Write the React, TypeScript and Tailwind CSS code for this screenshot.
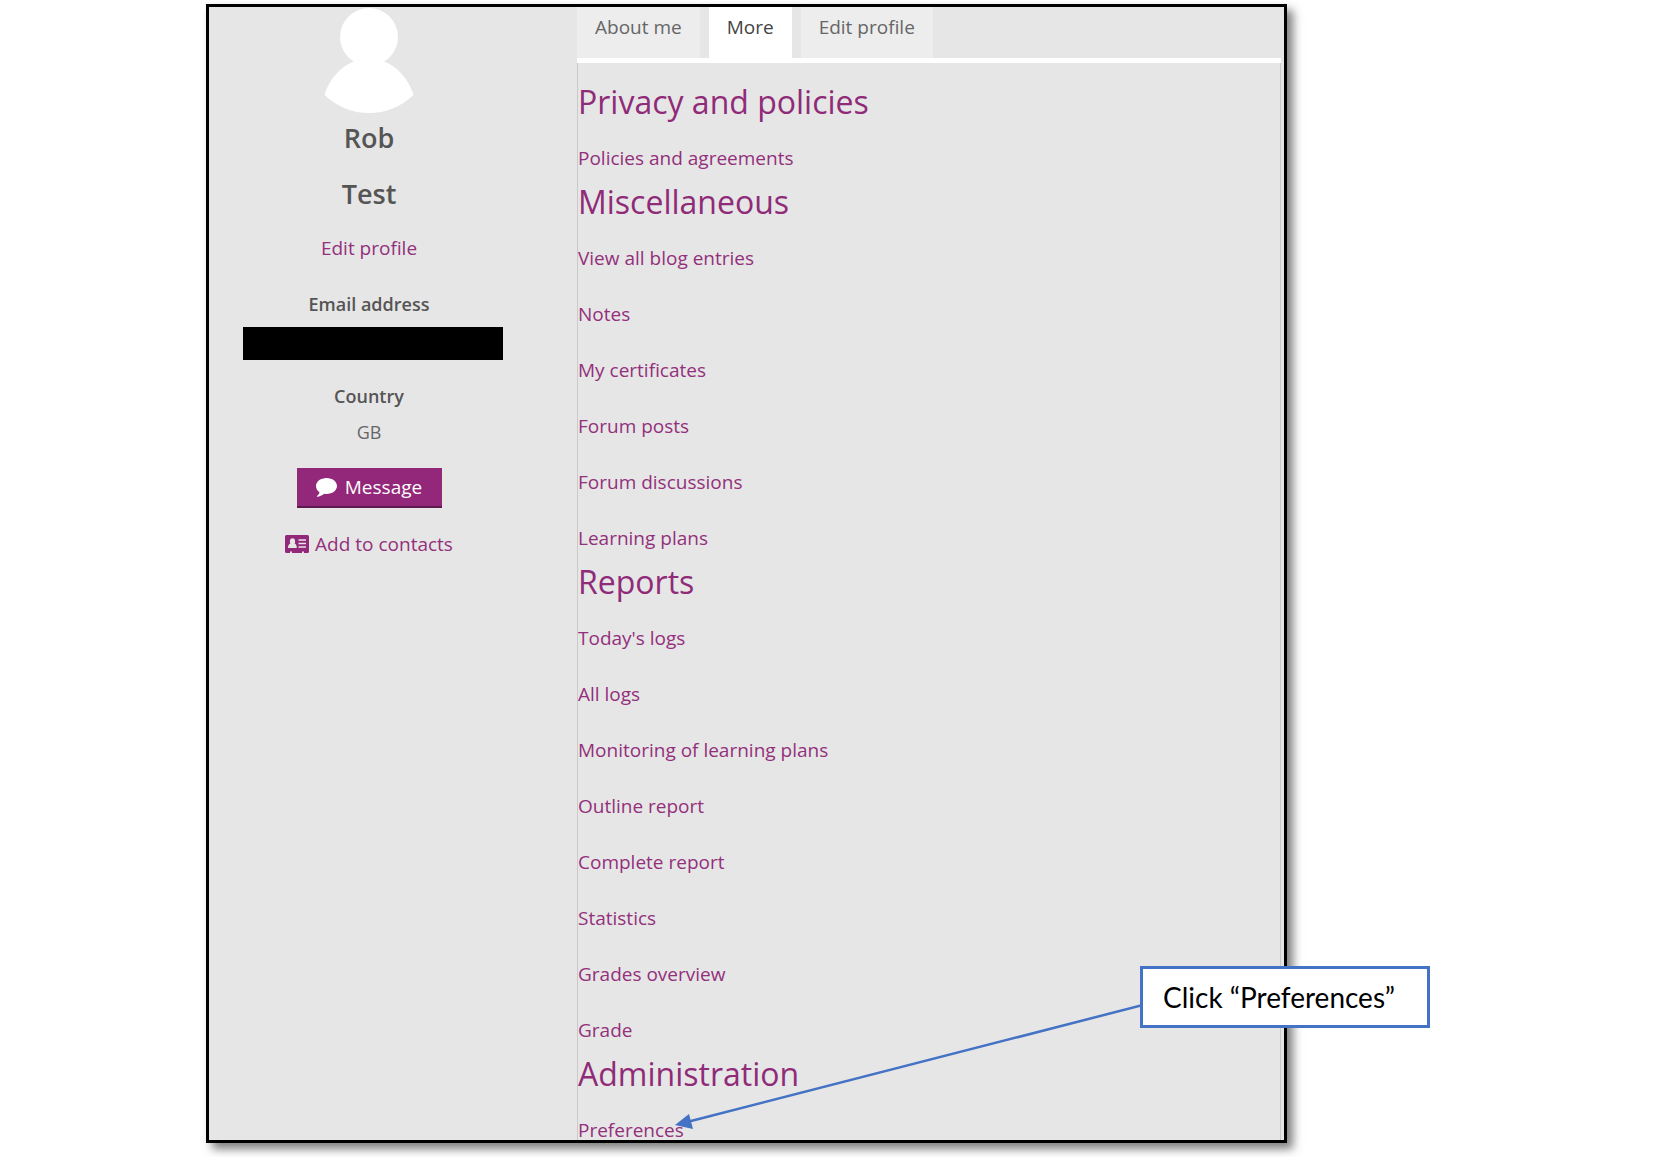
const sections = [
  { title: 'Privacy and policies', links: ['Policies and agreements'] },
  {
    title: 'Miscellaneous',
    links: ['View all blog entries', 'Notes', 'My certificates', 'Forum posts', 'Forum discussions', 'Learning plans'],
  },
  {
    title: 'Reports',
    links: [
      "Today's logs",
      'All logs',
      'Monitoring of learning plans',
      'Outline report',
      'Complete report',
      'Statistics',
      'Grades overview',
      'Grade',
    ],
  },
  { title: 'Administration', links: ['Preferences'] },
];

function Avatar() {
  return (
    <svg className="h-[106px] w-[90px] text-white" viewBox="0 0 90 106" fill="currentColor" role="img" aria-label="Profile picture">
      <circle cx="45" cy="30" r="29" />
      <path d="M31 54Q45 60 59 54C73 59 85 72 89.500 88Q70 106 45 106Q20 106 .5 88C5 72 17 59 31 54Z" />
    </svg>
  );
}

function Profile() {
  return (
    <aside className="flex w-80 shrink-0 flex-col items-center text-[19px] leading-6">
      <Avatar />
      <h2 className="mt-[7px] text-center text-[27px] font-semibold leading-9 text-[#555]">Rob</h2>
      <h2 className="mt-5 text-center text-[27px] font-semibold leading-9 text-[#555]">Test</h2>
      <a href="#edit" className="mt-6 text-[#93307c]">Edit profile</a>
      <dl className="mt-8 flex flex-col items-center text-[#666]">
        <dt className="text-lg font-semibold leading-6 text-[#555]">Email address</dt>
        <dd className="ml-2 mt-[11px] h-[33px] w-[260px] bg-black" />
        <dt className="mt-6 text-lg font-semibold leading-6 text-[#555]">Country</dt>
        <dd className="mt-3 text-lg leading-6">GB</dd>
      </dl>
      <button className="mt-6 flex h-10 w-[145px] items-center justify-center gap-2 border-b-2 border-[#5f1a50] bg-[#93277a] font-medium text-white">
        <svg className="h-[19px] w-[21px]" viewBox="0 0 21 19" fill="currentColor" aria-hidden="true">
          <path d="M10.500 0C16.300 0 21 3.600 21 8s-4.700 8-10.500 8c-.8 0-1.600-.1-2.400-.2C6 17.600 3.600 18.600 1.300 18.800c-.5 0-.6-.6-.2-.9 1.300-1 2.200-2.100 2.400-3.600C1.300 12.800 0 10.600 0 8 0 3.600 4.700 0 10.500 0Z" />
        </svg>
        Message
      </button>
      <a href="#contacts" className="mt-6 flex items-center gap-1.5 text-[#93307c]">
        <svg className="h-[18px] w-6" viewBox="0 0 24 18" aria-hidden="true">
          <path fill="#93277a" d="M1.500 0h21A1.500 1.500 0 0 1 24 1.500v15a1.500 1.500 0 0 1-1.500 1.500H19v-1.500h-2V18H7v-1.500H5V18H1.500A1.500 1.500 0 0 1 0 16.500v-15A1.500 1.500 0 0 1 1.500 0Z" />
          <g fill="#e6e6e6">
            <ellipse cx="7.500" cy="6.500" rx="2.600" ry="3.300" />
            <path d="M5.500 8.500h4c1.500.5 2.300 2 2.300 4.500H3c0-2.500.9-4 2.500-4.500Z" />
            <path d="M13.500 4.200H21v1.500h-7.500zM13.500 7.700H21v1.500h-7.500zM13.500 11.200H21v1.500h-7.500z" />
          </g>
        </svg>
        Add to contacts
      </a>
    </aside>
  );
}

function Callout() {
  return (
    <>
      <svg className="absolute bottom-2 left-[466px] h-[130px] w-[468px]" viewBox="0 0 468 130" aria-hidden="true">
        <line x1="14" y1="119.500" x2="468" y2="3" stroke="#4472c4" strokeWidth="2.500" />
        <path d="M0 123L14 112L18 127Z" fill="#4472c4" />
      </svg>
      <div className="absolute -right-[146px] bottom-28 w-[290px] border-3 border-[#4472c4] bg-white px-5 py-2.5 font-['Lato',sans-serif] text-[28px] leading-9 text-black">
        Click “Preferences”
      </div>
    </>
  );
}

export default function App() {
  return (
    <div className="bg-white pb-[15px] pl-[206px] pr-[367px] pt-1 font-['Open_Sans',sans-serif]">
      <main className="relative flex gap-12 border-3 border-black bg-[#e6e6e6] shadow-[6px_6px_9px_rgba(0,0,0,0.5)]">
        <Profile />
        <div className="mr-[3px] flex min-w-0 flex-1 flex-col">
          <nav className="flex gap-[9px] text-[19px] text-[#666]">
            <a href="#about" className="h-[51px] bg-[#ededed] px-[18px] pt-1.5 leading-7">About me</a>
            <a href="#more" aria-current="page" className="h-[51px] bg-white px-[18px] pt-1.5 leading-7 text-[#444]">More</a>
            <a href="#edit" className="h-[51px] bg-[#ededed] px-[18px] pt-1.5 leading-7">Edit profile</a>
          </nav>
          <div className="h-[5px] bg-white" />
          <div className="flex flex-col gap-[18px] border-x border-[#cacaca] pt-[23px] text-[#8f2b78]">
            {sections.map((s) => (
              <section key={s.title}>
                <h3 className="mb-[30px] text-[32px] leading-8">{s.title}</h3>
                <ul className="flex flex-col gap-9 text-[19px] leading-5 text-[#93307c]">
                  {s.links.map((l) => (
                    <li key={l}>
                      <a href="#more">{l}</a>
                    </li>
                  ))}
                </ul>
              </section>
            ))}
          </div>
        </div>
        <Callout />
      </main>
    </div>
  );
}
